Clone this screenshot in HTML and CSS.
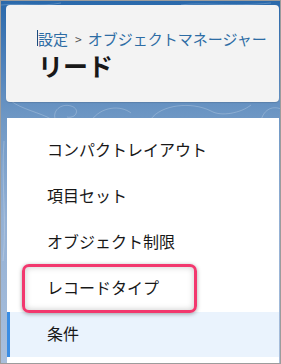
FILE: index.html
```html
<!DOCTYPE html>
<html lang="ja">
<head>
  <meta charset="UTF-8" />
  <meta name="viewport" content="width=device-width, initial-scale=1.0"/>
  <title>リード | オブジェクトマネージャー</title>
  <link rel="stylesheet" href="styles.css">
</head>
<body>
  <div class="frame">

    <!-- HEADER CARD -->
    <div class="header-card">
      <div class="crumbs">
        <span class="caret"></span><a href="#">設定</a><span class="sep">&gt;</span><a href="#">オブジェクトマネージャー</a>
      </div>
      <h1>リード</h1>
    </div>

    <!-- SIDE MENU -->
    <div class="panel">
      <ul class="menu">
        <li>コンパクトレイアウト</li>
        <li>項目セット</li>
        <li>オブジェクト制限</li>
        <li>レコードタイプ</li>
        <li class="active">条件</li>
      </ul>
      <div class="callout"></div>
    </div>

  </div>
</body>
</html>
```

FILE: styles.css
```css
html, body {
  margin: 0;
  padding: 0;
  overflow: hidden;
  font-family: "Noto Sans CJK JP", "Noto Sans", sans-serif;
}

.frame {
  box-sizing: border-box;
  width: 281px;
  height: 364px;
  border: 1px solid #9c9c9c;
  padding: 4px 1px 0 5px;
  display: flex;
  flex-direction: column;
  background:
    url("data:image/svg+xml,%3Csvg xmlns='http://www.w3.org/2000/svg' width='281' height='364'%3E%3Cg fill='none' stroke='white' stroke-opacity='0.22' stroke-width='1'%3E%3Cpath d='M10 100 C20 108 40 112 50 118'/%3E%3Cpath d='M55 120 C50 110 60 102 70 105 C80 108 75 118 66 116'/%3E%3Cpath d='M90 120 C100 105 120 104 130 112'/%3E%3Cpath d='M150 118 C160 104 190 100 210 110 C220 116 240 112 250 104'/%3E%3Cpath d='M260 120 C262 110 270 104 280 108'/%3E%3Cpath d='M3 140 C0 180 6 220 2 260'/%3E%3Cpath d='M0 4 C20 2 40 6 60 2'/%3E%3Cpath d='M180 4 C200 1 230 6 270 2'/%3E%3C/g%3E%3C/svg%3E"),
    linear-gradient(180deg, #2a69ab 0%, #4f82bb 18%, #6e97c4 32%, #93b0d4 60%, #a9bfdc 100%);
}

/* HEADER */
.header-card {
  box-sizing: border-box;
  height: 97px;
  padding: 22px 0 0 31px;
  background: #f3f3f3;
  border-radius: 4px;
  box-shadow: 0 1px 1px rgba(0, 0, 0, 0.12);
}

.crumbs {
  display: flex;
  align-items: center;
  height: 22px;
  font-size: 15px;
  color: #2d6ca4;
  white-space: nowrap;
}

.crumbs a {
  color: #2d6ca4;
  text-decoration: none;
}

.caret {
  width: 1px;
  height: 16px;
  background: #1b4b80;
}

.sep {
  color: #555;
  font-size: 12px;
  margin: 0 6px 0 7px;
}

.header-card h1 {
  margin: 0 0 0 1px;
  font-size: 25px;
  line-height: 32px;
  font-weight: bold;
  color: #181818;
}

/* SIDE MENU */
.panel {
  position: relative;
  flex: 1;
  margin: 16px 0 0 1px;
  padding-top: 10px;
  background: #ffffff;
}

.menu {
  list-style: none;
  margin: 0;
  padding: 0;
}

.menu li {
  box-sizing: border-box;
  height: 46px;
  padding: 0 0 4px 40px;
  display: flex;
  align-items: center;
  font-size: 16px;
  color: #181818;
}

.menu li.active {
  height: 45px;
  padding-left: 37px;
  background: #eaf3fd;
  border-left: 3px solid #3b8de3;
}

/* ANNOTATION BOX */
.callout {
  position: absolute;
  left: 15px;
  top: 146px;
  width: 175px;
  height: 49px;
  box-sizing: border-box;
  border: 3px solid #f2386e;
  border-radius: 7px;
  box-shadow: 0 1px 4px rgba(0, 0, 0, 0.35), inset 0 0 6px rgba(0, 0, 0, 0.22);
}
```
